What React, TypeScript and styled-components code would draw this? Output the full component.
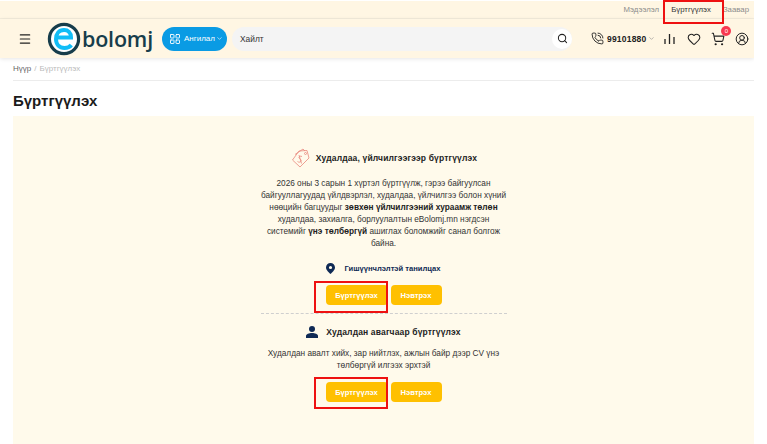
import React from "react";
import styled, { createGlobalStyle } from "styled-components";
import { Menu, ChevronDown, Search, PhoneCall, Heart, ShoppingCart, CircleUserRound, LayoutGrid } from "lucide-react";

const Global = createGlobalStyle`
  html, body { margin: 0; padding: 0; background: #fff; overflow: hidden; }
  body { font-family: "Liberation Sans", Arial, sans-serif; color: #222; }
  * { box-sizing: border-box; }
`;
const Page = styled.div`width: 754px; height: 444px; padding-top: 1px; position: relative; overflow: hidden;`;
const TopBar = styled.div`
  height: 18px; background: #fff6e3; border-bottom: 1px solid #f3ecdc;
  display: flex; justify-content: flex-end; align-items: center; gap: 12px; font-size: 7.8px; color: #8c8c8c; padding-right: 5px; padding-bottom: 1px;
`;
const TopLink = styled.span<{ $active?: boolean }>`
  color: ${p => (p.$active ? "#333" : "#8c8c8c")};
`;
const Header = styled.header`
  height: 39px; background: #fff6e3; display: flex; align-items: center; box-shadow: 0 1px 4px rgba(0,0,0,.1); padding-left: 18px; position: relative;
`;
const Burger = styled(Menu)`width: 14px; height: 14px; color: #222; flex: none; margin-right: 15px;`;
const Logo = styled.div`display: flex; align-items: center; width: 105px; flex: none; margin-right: 10px;`;
const Wordmark = styled.span`font-family: "Open Sans", sans-serif; font-size: 21.5px; font-weight: 600; color: #173d4b; letter-spacing: -0.2px; margin-left: 1px; line-height: 1;`;
const CategoryButton = styled.button`
  width: 65px; height: 24px; border: 0; border-radius: 12px; background: #0a9be4; color: #fff; flex: none;
  display: flex; align-items: center; font: 8px "Liberation Sans", sans-serif; padding: 0 0 0 7px; margin-right: 5px;
`;
const SearchBox = styled.div`
  width: 340px; height: 24px; background: #f4f4f4; border-radius: 12px; flex: none; display: flex; align-items: center; justify-content: space-between; padding-left: 8px; font-size: 8.4px; color: #333;
`;
const SearchButton = styled.span`width: 20px; height: 20px; background: #fff; border-radius: 50%; display: flex; align-items: center; justify-content: center;`;
const Tools = styled.div`display: flex; align-items: center; margin-left: 19px;`;
const Phone = styled.span`display: flex; align-items: center; font-size: 8.5px; font-weight: 700; color: #222; letter-spacing: .2px; margin-right: 9px; gap: 3px;`;
const Cart = styled.span`position: relative; display: flex; margin: 0 10px;`;
const Badge = styled.span`position: absolute; top: -6px; right: -6px; width: 10px; height: 10px; border-radius: 50%; background: #f8384f; color: #fff; font-size: 6px; line-height: 10px; text-align: center;`;
const Bars = styled.svg`display: block; margin-right: 12px;`;
const Crumbs = styled.nav`margin: 0 0 0 13px; height: 23px; border-bottom: 1px solid #ececec; font-size: 8px; color: #bbb; display: flex; align-items: center; gap: 3px; padding-bottom: 1px;`;
const CrumbHome = styled.span`color: #666;`;
const Title = styled.h1`margin: 0 0 0 13px; height: 35px; display: flex; align-items: center; font-size: 15px; font-weight: 700; color: #1b1b1b; padding-top: 4px; letter-spacing: 0;`;
const Card = styled.main`margin-left: 13px; background: #fffaeb; height: 330px; display: flex; justify-content: center; padding-top: 31px;`;
const Column = styled.div`width: 246px; display: flex; flex-direction: column; align-items: center; text-align: center;`;
const SectionHead = styled.div`display: flex; align-items: center; gap: 4px; min-height: 14px; font-size: 8.5px; font-weight: 700; color: #222; letter-spacing: .15px;`;
const Para = styled.p`margin: 9px -3px 0; font-size: 8.25px; line-height: 12px; color: #333; b { color: #222; }`;
const Meet = styled.div`display: flex; align-items: center; gap: 9px; margin-top: 13px; font-size: 7.6px; font-weight: 700; color: #0f2a55;`;
const Actions = styled.div<{ $top: number }>`display: flex; gap: 3px; margin-top: ${p => p.$top}px;`;
const Action = styled.button<{ $wide?: boolean }>`
  width: ${p => (p.$wide ? "62px" : "51px")}; height: 20px; background: #ffc000; color: #fff; border: 0; border-radius: 4px; font: 700 7.6px "Liberation Sans", sans-serif; padding: 0;
`;
const Divider = styled.hr`width: 100%; border: 0; border-top: 1px dashed #cfcfcf; margin: 8px 0 11px;`;
const Highlight = styled.div<{ $x: number; $y: number; $w: number; $h: number }>`
  position: absolute; left: ${p => p.$x}px; top: ${p => p.$y}px; width: ${p => p.$w}px; height: ${p => p.$h}px; border: 2px solid #ee1111; pointer-events: none;
`;

const EBadge = () => (
  <svg width="34" height="34" viewBox="0 0 34 34" style={{ flex: "none" }}>
    <circle cx="17" cy="17" r="14.6" fill="#fff" stroke="#173d4b" strokeWidth="3.2" />
    <path d="M9.5 15.5 H24 C24 10.5 21 8 17 8 C12 8 9 12 9 17 C9 22.5 12.5 26 17.5 26 C20.5 26 22.8 25 24.3 23" fill="none" stroke="#11bdf7" strokeWidth="4" />
  </svg>
);
const PriceTag = () => (
  <svg width="22" height="22" viewBox="0 0 22 22" fill="none" stroke="#e8887c" strokeWidth=".8">
    <path d="M9 4 L17 3.5 L19 11 L10 20 L2.5 13 Z" />
    <path d="M5 7.5 L13 2 L15 4" />
    <circle cx="15.5" cy="6.5" r="1" />
    <path d="M12 9.5 C10 8.5 8 10 9.5 11.5 C11 12.5 12 14 10 15 C9 15.4 8 15 7.5 14.5 M9 8 L11.5 16.5" />
  </svg>
);
const Pin = () => (
  <svg width="9" height="11" viewBox="0 0 9 11">
    <path fillRule="evenodd" fill="#0f2a55" d="M4.5 0 C7 0 9 2 9 4.4 C9 7 6 9.6 4.5 11 C3 9.6 0 7 0 4.4 C0 2 2 0 4.5 0 Z M4.5 2.9 A1.6 1.6 0 1 0 4.5 6.1 A1.6 1.6 0 1 0 4.5 2.9 Z" />
  </svg>
);
const Person = () => (
  <svg width="12" height="12" viewBox="0 0 12 12" style={{ marginRight: 4 }}>
    <circle cx="6" cy="3" r="3" fill="#0f2a55" />
    <path fill="#0f2a55" d="M0 12 V10 C0 8 3 7 6 7 C9 7 12 8 12 10 V12 Z" />
  </svg>
);

export default function App() {
  return (
    <Page>
      <Global />
      <TopBar>
        <TopLink>Мэдээлэл</TopLink>
        <TopLink $active>Бүртгүүлэх</TopLink>
        <TopLink>Заавар</TopLink>
      </TopBar>
      <Header>
        <Burger strokeWidth={2} />
        <Logo>
          <EBadge />
          <Wordmark>bolomj</Wordmark>
        </Logo>
        <CategoryButton>
          <LayoutGrid size={12} strokeWidth={1.8} style={{ marginRight: 3 }} />
          Ангилал
          <ChevronDown size={7} style={{ marginLeft: 1 }} />
        </CategoryButton>
        <SearchBox>
          Хайлт
          <SearchButton><Search size={11} color="#222" strokeWidth={2.2} /></SearchButton>
        </SearchBox>
        <Tools>
          <Phone>
            <PhoneCall size={13} color="#222" strokeWidth={1.7} />
            99101880
            <ChevronDown size={7} color="#888" style={{ marginLeft: -1 }} />
          </Phone>
          <Bars width="11" height="11" viewBox="0 0 11 11" stroke="#222" strokeWidth="1.3">
            <path d="M1 11V6M5.5 11V1M10 11V4" />
          </Bars>
          <Heart size={14} color="#222" strokeWidth={1.8} />
          <Cart>
            <ShoppingCart size={14} color="#222" strokeWidth={1.8} />
            <Badge>0</Badge>
          </Cart>
          <CircleUserRound size={14} color="#222" strokeWidth={1.7} />
        </Tools>
      </Header>
      <Crumbs><CrumbHome>Нүүр</CrumbHome> / <span>Бүртгүүлэх</span></Crumbs>
      <Title>Бүртгүүлэх</Title>
      <Card>
        <Column>
          <SectionHead><PriceTag />Худалдаа, үйлчилгээгээр бүртгүүлэх</SectionHead>
          <Para>
            2026 оны 3 сарын 1 хүртэл бүртгүүлж, гэрээ байгуулсан байгууллагуудад үйлдвэрлэл, худалдаа, үйлчилгээ болон хүний нөөцийн багцуудыг <b>зөвхөн үйлчилгээний хураамж төлөн</b> худалдаа, захиалга, борлуулалтын eBolomj.mn нэгдсэн системийг <b>үнэ төлбөргүй</b> ашиглах боломжийг санал болгож байна.
          </Para>
          <Meet><Pin />Гишүүнчлэлтэй танилцах</Meet>
          <Actions $top={11}><Action $wide>Бүртгүүлэх</Action><Action>Нэвтрэх</Action></Actions>
          <Divider />
          <SectionHead><Person />Худалдан авагчаар бүртгүүлэх</SectionHead>
          <Para>Худалдан авалт хийх, зар нийтлэх, ажлын байр дээр CV үнэ төлбөргүй илгээх эрхтэй</Para>
          <Actions $top={10}><Action $wide>Бүртгүүлэх</Action><Action>Нэвтрэх</Action></Actions>
        </Column>
      </Card>
      <Highlight $x={663} $y={0} $w={61} $h={24} />
      <Highlight $x={314} $y={281} $w={74} $h={32} />
      <Highlight $x={314} $y={377} $w={74} $h={32} />
    </Page>
  );
}
